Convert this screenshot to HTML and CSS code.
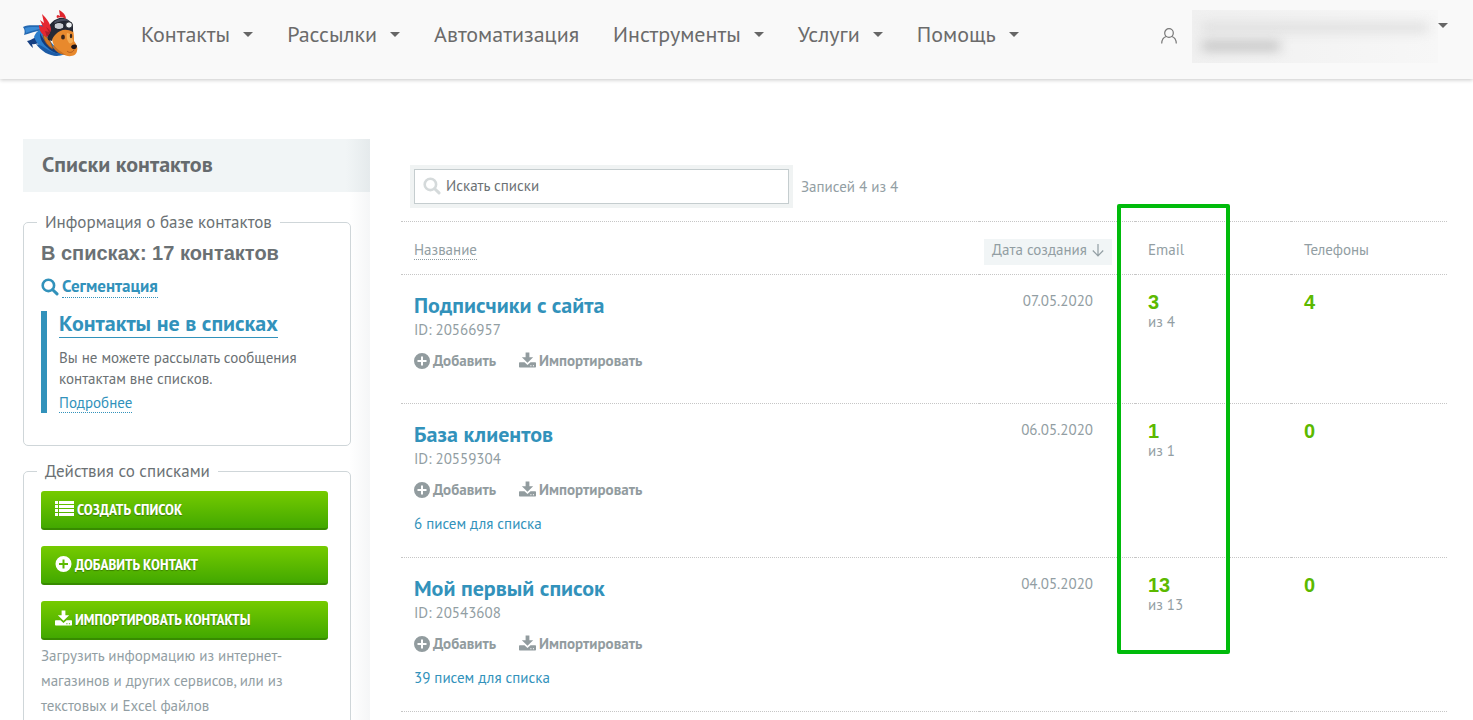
FILE: index.html
```html
<!DOCTYPE html>
<html lang="ru">
<head>
<meta charset="utf-8">
<title>Списки контактов</title>
<link rel="stylesheet" href="styles.css">
</head>
<body>
<svg class="sprite" aria-hidden="true">
  <symbol id="search" viewBox="0 0 18 18"><circle cx="7.4" cy="7.4" r="5.700" fill="none" stroke="currentColor" stroke-width="2.600"/><path d="M11.700 11.700l4.300 4.200" stroke="currentColor" stroke-width="3" stroke-linecap="round"/></symbol>
  <symbol id="plus" viewBox="0 0 16 16"><path fill="currentColor" fill-rule="evenodd" d="M8 0a8 8 0 1 0 0 16A8 8 0 0 0 8 0zM7 3.500h2V7h3.500v2H9v3.500H7V9H3.500V7H7z"/></symbol>
  <symbol id="import" viewBox="0 0 18 16"><path fill="currentColor" d="M7 0h4v5h4L9 11 3 5h4z"/><path fill="currentColor" fill-rule="evenodd" d="M.8 10.300h5L9 13.200l3.200-2.900h5q.8 0 .8.800v4.100q0 .8-.8.800H.8q-.8 0-.8-.8v-4.100q0-.8.800-.8zM12 13.600v1h1.200v-1zM14.700 13.600v1h1.200v-1z"/></symbol>
  <symbol id="list" viewBox="0 0 19 15"><path fill="currentColor" d="M0 0h3v3H0zM4 0h15v3H4zM0 4h3v3H0zM4 4h15v3H4zM0 8h3v3H0zM4 8h15v3H4zM0 12h3v3H0zM4 12h15v3H4z"/></symbol>
</svg>

<header class="topbar">
  <a class="logo" href="#" aria-label="Главная">
    <svg viewBox="0 0 56 50">
      <path fill="#2468b0" d="M0 18c6-3 12-1 20-2l5 6c-9-2-17 2-24 4 1-3 1-5-1-8z"/>
      <path fill="#3b8bd6" d="M2 19c6-2 12 0 19-1l2 2C16 19 9 22 3 24z"/>
      <path fill="#153f82" d="M4 32c6-1 9-5 14-7l3 9c-5-1-9 2-12 1l1 4c-3-2-4-5-6-7z"/>
      <path fill="#2b7dcb" d="M11 28c2-5 6-9 11-8 1 8 8 18 20 25-5 3-13 2-18-2-6-3-10-8-13-15z"/>
      <path fill="#123c7c" d="M17 24c4 9 12 16 24 20-5 2-12-1-16-5-5-4-8-8-8-15z"/>
      <path fill="#1d5ba5" d="M13 35c7 1 13 9 25 10l-4 2c-8 0-16-5-21-12z"/>
      <path fill="#e8892d" d="M29 24c5-6 14-8 21-3 1 4 1 8 1 11 3 4 4 7 3 10-1 6-10 7-15 2-7-4-11-10-10-20z"/>
      <path fill="#c97023" d="M31 36c3 5 8 7 12 10-6 0-11-4-13-8z"/>
      <path fill="#d17724" stroke="#93501d" stroke-width=".8" d="M20 26c4 1 8 6 10 14-5-2-9-8-10-14z"/>
      <path fill="#f6ad55" d="M44 24c3 0 5 3 6 8 0 2-3 3-4 2-2-3-3-6-2-10z"/>
      <path fill="#252936" d="M25 31c-2-10 1-18 9-21 6-3 13 0 16 7v6c-7-4-13-2-17 2-2 2-4 4-4 7z"/>
      <path fill="#4b5061" d="M31 13c5-4 12-4 15-1-5-1-10 0-14 3z"/>
      <ellipse cx="36" cy="17" rx="5" ry="3.500" fill="#c9ccd3" stroke="#171a22"/>
      <ellipse cx="46" cy="16" rx="3.400" ry="3.200" fill="#edf0f2" stroke="#171a22"/>
      <path fill="#e52730" d="M24 28c-5-2-8-6-8-12l4 2-3-7 4 3-2-9c4 4 8 8 9 15 0 3-2 5-4 8z"/>
      <path fill="#ad1e2a" d="M22 22l4 1-3-5c3 2 5 4 4 6l-3 4z"/>
      <path fill="#df252d" d="M34 9c-1-2 0-3 1-3l2 1-1-6c4 2 7 5 7 9-3-2-6-2-9-1z"/>
      <ellipse cx="40" cy="28" rx="1.900" ry="2.600" fill="#3a251b"/>
      <ellipse cx="48" cy="27" rx="1.200" ry="2.200" fill="#3a251b"/>
      <path fill="#20151a" d="M48 38c1-3 5-3 6-1 0 3-4 5-6 1z"/>
      <path fill="none" stroke="#ad5b20" d="M51 41c-2 3-5 3-7 1"/>
    </svg>
  </a>
  <nav class="menu">
    <a class="drop" href="#">Контакты</a>
    <a class="drop" href="#">Рассылки</a>
    <a href="#">Автоматизация</a>
    <a class="drop" href="#">Инструменты</a>
    <a class="drop" href="#">Услуги</a>
    <a class="drop" href="#">Помощь</a>
  </nav>
  <button class="account" type="button" aria-label="Аккаунт">
    <svg class="user" viewBox="0 0 16 16"><g fill="none" stroke="#777" stroke-width="1.200"><circle cx="8" cy="5" r="4.300"/><path d="M.7 15.500C.8 11.500 2.600 9.300 5.300 8.500M10.700 8.500c2.700.8 4.500 3 4.600 7"/></g></svg>
    <span class="hidden-id"><span class="smear mail"></span><span class="smear number"></span></span>
  </button>
</header>

<div class="page">
  <aside class="sidebar">
    <h1>Списки контактов</h1>
    <div class="panels">
      <fieldset class="info">
        <legend>Информация о базе контактов</legend>
        <p class="total">В списках: 17 контактов</p>
        <p class="segment"><svg><use href="#search"/></svg><a class="dotted" href="#">Сегментация</a></p>
        <div class="note">
          <h2><a href="#">Контакты не в списках</a></h2>
          <p>Вы не можете рассылать сообщения контактам вне списков.</p>
          <a class="dotted" href="#">Подробнее</a>
        </div>
      </fieldset>
      <fieldset class="tasks">
        <legend>Действия со списками</legend>
        <button class="green" type="button"><svg class="wide"><use href="#list"/></svg>СОЗДАТЬ СПИСОК</button>
        <button class="green" type="button"><svg><use href="#plus"/></svg>ДОБАВИТЬ КОНТАКТ</button>
        <button class="green" type="button"><svg class="tray"><use href="#import"/></svg>ИМПОРТИРОВАТЬ КОНТАКТЫ</button>
        <p class="hint">Загрузить информацию из интернет-магазинов и других сервисов, или из текстовых и Excel файлов</p>
      </fieldset>
    </div>
  </aside>

  <main class="content">
    <div class="filter">
      <label class="search"><svg><use href="#search"/></svg><input type="text" placeholder="Искать списки" aria-label="Искать списки"></label>
      <span>Записей 4 из 4</span>
    </div>
    <div class="lists">
      <table>
        <colgroup><col><col class="narrow"><col class="narrow"><col class="narrow"></colgroup>
        <thead>
          <tr>
            <th><a class="dotted" href="#">Название</a></th>
            <th class="sort"><button type="button">Дата создания<svg viewBox="0 0 12 14"><path d="M6 1v12M.8 7.500L6 12.800l5.200-5.300" fill="none" stroke="currentColor" stroke-width="1.200"/></svg></button></th>
            <th>Email</th>
            <th>Телефоны</th>
          </tr>
        </thead>
        <tbody>
          <tr class="plain">
            <td><h3><a href="#">Подписчики с сайта</a></h3><p class="id">ID: 20566957</p><div class="actions"><a href="#"><svg><use href="#plus"/></svg>Добавить</a><a href="#"><svg class="tray"><use href="#import"/></svg>Импортировать</a></div></td>
            <td class="date">07.05.2020</td>
            <td class="count"><b>3</b><span>из 4</span></td>
            <td class="count"><b>4</b></td>
          </tr>
          <tr>
            <td><h3><a href="#">База клиентов</a></h3><p class="id">ID: 20559304</p><div class="actions"><a href="#"><svg><use href="#plus"/></svg>Добавить</a><a href="#"><svg class="tray"><use href="#import"/></svg>Импортировать</a></div><a class="letters" href="#">6 писем для списка</a></td>
            <td class="date">06.05.2020</td>
            <td class="count"><b>1</b><span>из 1</span></td>
            <td class="count"><b>0</b></td>
          </tr>
          <tr>
            <td><h3><a href="#">Мой первый список</a></h3><p class="id">ID: 20543608</p><div class="actions"><a href="#"><svg><use href="#plus"/></svg>Добавить</a><a href="#"><svg class="tray"><use href="#import"/></svg>Импортировать</a></div><a class="letters" href="#">39 писем для списка</a></td>
            <td class="date">04.05.2020</td>
            <td class="count"><b>13</b><span>из 13</span></td>
            <td class="count"><b>0</b></td>
          </tr>
        </tbody>
      </table>
      <div class="marker"></div>
    </div>
  </main>
</div>
</body>
</html>
```
FILE: styles.css
```css
* { box-sizing: border-box; }
body {
  margin: 0;
  height: 100vh;
  overflow: hidden;
  background: #fff;
  color: #6b7174;
  font: 15px/20px "PT Sans", Roboto, "Noto Sans", sans-serif;
}
h1, h2, h3, p { margin: 0; }
a { color: #3292bb; text-decoration: none; }
button { font: inherit; border: 0; cursor: pointer; }
svg { flex: none; }
.sprite { position: absolute; width: 0; height: 0; }
.dotted { border-bottom: 1px dotted currentColor; }

.topbar {
  display: flex;
  align-items: flex-start;
  height: 79px;
  padding: 0 25px 0 23px;
  background: #f9f9f9;
  box-shadow: 0 1px 4px rgba(0, 0, 0, .22);
}
.logo { width: 56px; padding-top: 9px; }
.logo svg { display: block; width: 56px; height: 50px; }
.menu { display: flex; flex: 1; gap: 34px; padding: 20px 0 0 62px; }
.menu a { display: flex; align-items: center; gap: 13px; color: #6b6b6b; font-size: 22px; line-height: 28px; white-space: nowrap; }
.drop::after, .account::after {
  content: "";
  border: 5px solid transparent;
  border-top-color: #666;
  border-bottom: 0;
}
.account { display: flex; align-items: flex-start; padding: 10px 0 0; background: none; }
.user { width: 16px; height: 16px; margin: 18px 15px 0 0; }
.hidden-id { display: flex; flex-direction: column; gap: 10px; width: 246px; height: 53px; padding: 13px 10px; overflow: hidden; background: linear-gradient(90deg, #f0f0f0, #f7f7f7); }
.smear { height: 10px; filter: blur(6px); background: #dcdcdc; }
.number { width: 78px; background: #b8b8b8; }
.account::after { margin-top: 13px; }

.page { display: flex; padding: 60px 26px 0 23px; }
.sidebar { flex: none; width: 347px; }
.sidebar h1 { padding: 11px 19px 14px; color: #666b6e; font-size: 22px; line-height: 28px; background: linear-gradient(90deg, #f1f5f6 93%, #e5eaec); }
.panels { padding: 18px 19px 0 0; background: linear-gradient(90deg, #fff 94%, #f5f6f7); }
fieldset { min-width: 0; margin: 0; padding: 0 17px; border: 1px solid #cfd6d9; border-radius: 5px; }
legend { margin-left: -4px; padding: 0 8px; font-size: 17px; line-height: 24px; }
.info { padding-bottom: 32px; }
.total { font: bold 20px/24px "Liberation Sans", Arial, sans-serif; padding-top: 7px; }
.segment { display: flex; align-items: center; gap: 3px; padding: 10px 0 13px; font-weight: bold; font-size: 17px; line-height: 22px; color: #3292bb; }
.segment svg { width: 18px; height: 18px; }
.note { padding-left: 12px; border-left: 6px solid #3292bb; }
.note h2 { font-size: 22px; line-height: 24px; margin-bottom: 12px; }
.note h2 a { border-bottom: 1px solid currentColor; }
.note p { line-height: 21px; margin-bottom: 4px; }
.tasks { margin-top: 13px; }
.green {
  display: flex;
  align-items: center;
  gap: 3px;
  width: 287px;
  max-width: 100%;
  height: 39px;
  margin-bottom: 16px;
  padding: 0 14px 2px;
  border-bottom: 2px solid #378b00;
  border-radius: 3px;
  background: linear-gradient(#76cb00, #42a800);
  color: #fff;
  font: bold 16px/20px "PT Sans Narrow", "Liberation Sans Narrow", Roboto, sans-serif;
  text-shadow: 0 1px 1px rgba(0, 0, 0, .3);
}
.green svg { width: 17px; height: 16px; }
.green .wide { width: 19px; height: 15px; }
.green .tray, .actions .tray { width: 17px; margin-top: -2px; }
.tasks legend + .green { margin-top: 8px; }
.hint { margin-top: -13px; padding-bottom: 20px; color: #929ea3; line-height: 25px; }

.content { flex: 1; min-width: 0; padding: 26px 0 0 31px; color: #929ea3; }
.filter { display: flex; align-items: center; gap: 8px; padding-left: 9px; }
.search { display: flex; align-items: center; gap: 5px; width: 383px; height: 43px; padding: 0 9px 1px; border: 4px solid #f0f3f3; outline: 1px solid #c5cdcf; outline-offset: -5px; }
.search svg { width: 18px; height: 18px; color: #d5dadb; }
.search input { flex: 1; min-width: 0; padding: 0; border: 0; outline: 0; background: none; font: inherit; color: #6b7174; }
.search input::placeholder { color: #6b7174; opacity: 1; }
.lists { position: relative; margin-top: 13px; }
table { width: 100%; table-layout: fixed; border-collapse: collapse; border-top: 1px dotted #c6c6c6; }
.narrow { width: 156px; }
tr { border-bottom: 1px dotted #c6c6c6; }
th { height: 53px; padding: 3px 13px 0; text-align: left; font-weight: normal; }
th .dotted { color: inherit; }
.sort { padding: 7px 5px 0; }
.sort button { display: flex; align-items: center; gap: 5px; height: 26px; padding: 0 8px 3px; background: #f1f5f6; color: inherit; white-space: nowrap; }
.sort svg { width: 12px; height: 14px; }
td { height: 154px; padding: 16px 13px 0; vertical-align: top; }
.plain td { height: 129px; }
h3 { font-size: 22px; line-height: 28px; }
.id { padding-top: 1px; }
.actions { display: flex; gap: 23px; padding-top: 11px; font-weight: bold; }
.actions a { display: flex; align-items: center; gap: 3px; color: #929c9f; }
.actions svg { width: 16px; height: 16px; }
.letters { display: block; padding-top: 14px; }
.date { text-align: right; padding-right: 42px; }
.count b { display: block; color: #5cb900; font: bold 20px/22px "Liberation Sans", Arial, sans-serif; }
.count span { display: block; line-height: 18px; }
.marker { position: absolute; top: -17px; right: 217px; width: 113px; height: 450px; border: 4px solid #00bb0b; border-radius: 2px; }
```
